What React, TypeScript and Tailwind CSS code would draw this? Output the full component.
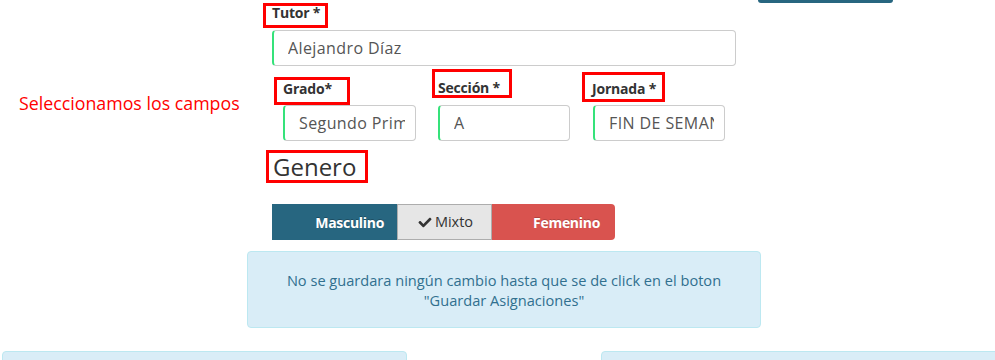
const font = { fontFamily: '"Open Sans", Lato, sans-serif' }

function RedBox({ children, className }: { children: React.ReactNode; className: string }) {
  return (
    <div className={`flex items-center border-[3px] border-[#ff0000] text-[14px] font-bold tracking-[-0.2px] text-[#333] ${className}`}>
      {children}
    </div>
  )
}

function Field({ value, className }: { value: string; className: string }) {
  return (
    <div
      className={`flex h-[36px] items-center rounded-[4px] border border-l-2 border-[#cccccc] border-l-[#35e27a] bg-white pl-[14px] pr-[10px] text-[16px] tracking-[0.4px] text-[#555] ${className}`}
    >
      <span className="block overflow-hidden whitespace-nowrap">{value}</span>
    </div>
  )
}

export default function App() {
  return (
    <div className="h-[360px] w-[995px] overflow-hidden bg-white" style={font}>
      {/* botón cortado arriba */}
      <div className="flex h-[3px]">
        <div className="ml-[758px] h-[3px] w-[135px] rounded-b-[3px] bg-[#276680]" />
      </div>

      <div className="flex">
        <div className="w-[263px] shrink-0 pl-[19px] pt-[88px]">
          <span className="text-[17.8px] leading-[24px] text-[#ff0000]">Seleccionamos los campos</span>
        </div>

        <div className="flex flex-col">
          <RedBox className="h-[25px] w-[65px] pb-[6px] pl-[6px]">Tutor *</RedBox>
          <Field value="Alejandro Díaz" className="ml-[9px] mt-[2px] w-[464px]" />

          <div className="flex">
            <div className="ml-[11px] flex flex-col">
              <RedBox className="mt-[11px] h-[28px] w-[76px] pb-[6px] pl-[6px]">Grado*</RedBox>
              <Field value="Segundo Primaria" className="ml-[9px] w-[133px]" />
            </div>
            <div className="ml-[16px] flex flex-col">
              <RedBox className="mt-[3px] h-[29px] w-[80px] pl-[3px] pt-[8px]">Sección *</RedBox>
              <Field value="A" className="ml-[6px] mt-[7px] w-[132px]" />
            </div>
            <div className="ml-[12px] flex flex-col">
              <RedBox className="mt-[6px] h-[30px] w-[83px] pl-[7px] pt-[2px]">Jornada *</RedBox>
              <Field value="FIN DE SEMANA" className="ml-[11px] mt-[3px] w-[132px]" />
            </div>
          </div>

          <div className="ml-[3px] mt-[9px] flex h-[33px] w-[102px] items-center border-[3px] border-[#ff0000] pl-[4px] text-[24px] text-[#333]">
            Genero
          </div>

          <div className="ml-[9px] mt-[21px] flex h-[36px] text-[14px]">
            <div
              className="flex w-[125px] items-center justify-end bg-[#276680] pr-[13px] font-bold tracking-[-0.3px] text-white"
              style={{ textShadow: '0 -1px 0 rgba(0,0,0,0.25)' }}
            >
              Masculino
            </div>
            <div className="flex w-[95px] items-center justify-center gap-[3px] border border-[#adadad] bg-[#e6e6e6] pl-[2px] text-[14.5px] text-[#333]">
              <svg viewBox="0 0 512 512" className="h-[13px] w-[14px] fill-[#333]">
                <path d="M173.9 439.4l-166.4-166.4c-10-10-10-26.2 0-36.2l36.2-36.2c10-10 26.2-10 36.2 0L192 312.7 432.1 72.6c10-10 26.2-10 36.2 0l36.2 36.2c10 10 10 26.2 0 36.2l-294.4 294.4c-10 10-26.2 10-36.2 0z" />
              </svg>
              Mixto
            </div>
            <div
              className="flex w-[123px] items-center justify-end rounded-r-[4px] bg-[#d9534f] pr-[15px] font-bold tracking-[-0.3px] text-white"
              style={{ textShadow: '0 -1px 0 rgba(0,0,0,0.2)' }}
            >
              Femenino
            </div>
          </div>
        </div>
      </div>

      <div className="ml-[247px] mt-[11px] flex h-[77px] w-[514px] flex-col items-center justify-center rounded-[4px] border border-[#bce8f1] bg-[#d9edf7] text-center text-[14.6px] leading-[20px] text-[#31708f]">
        <p>No se guardara ningún cambio hasta que se de click en el boton</p>
        <p>"Guardar Asignaciones"</p>
      </div>

      <div className="mt-[23px] flex">
        <div className="ml-[2px] h-[40px] w-[405px] shrink-0 rounded-[4px] border border-[#bce8f1] bg-[#d9edf7]" />
        <div className="ml-[194px] h-[40px] w-[400px] shrink-0 rounded-[4px] border border-[#bce8f1] bg-[#d9edf7]" />
      </div>
    </div>
  )
}
